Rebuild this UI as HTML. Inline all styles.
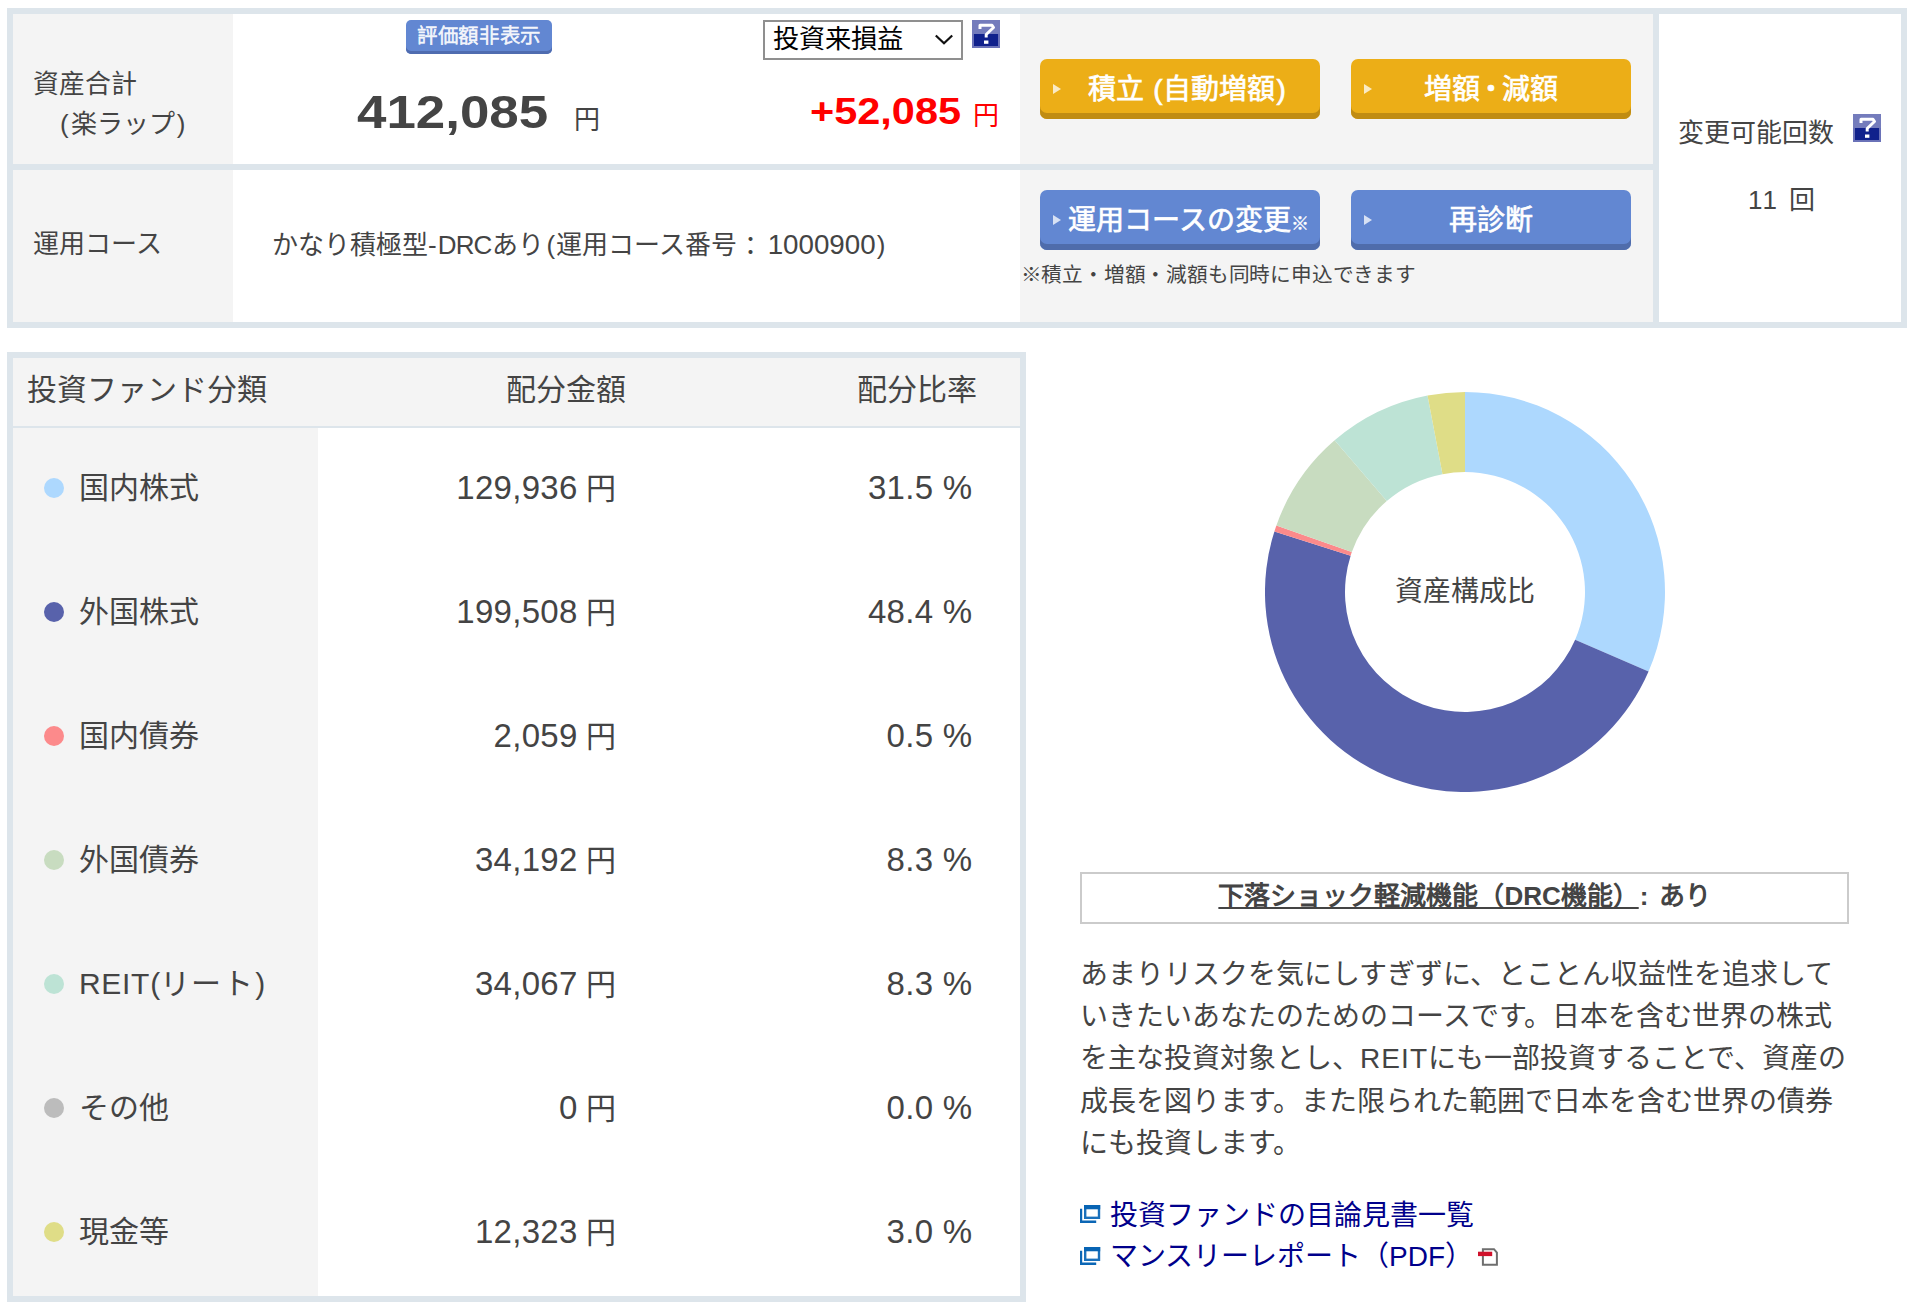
<!DOCTYPE html>
<html lang="zh-CN">
<head>
<meta charset="utf-8">
<title>楽ラップ</title>
<style>
html,body{margin:0;padding:0;background:#fff;}
body{width:1924px;height:1306px;position:relative;overflow:hidden;
  font-family:"Liberation Sans",sans-serif;color:#444;font-size:26px;}
.abs{position:absolute;white-space:nowrap;}
.bd{position:absolute;background:#dde5eb;}
.gray{position:absolute;background:#f4f4f4;}
.t26{font-size:26px;line-height:38px;}
.t30{font-size:30px;line-height:40px;}
/* buttons */
.btn{position:absolute;width:280px;height:60px;border-radius:7px;box-sizing:border-box;
  color:#fff;font-weight:normal;-webkit-text-stroke:0.7px #fff;font-size:28px;line-height:61px;text-align:center;white-space:nowrap;}
.btn.or{background:#ecae17;box-shadow:inset 0 -6px 0 #c08c12;}
.btn.bl{background:#6287d2;box-shadow:inset 0 -6px 0 #4f6cab;}
.btn i{position:absolute;left:13px;top:25px;width:0;height:0;border-left:8px solid rgba(255,255,255,.75);
  border-top:5px solid transparent;border-bottom:5px solid transparent;}
/* table2 */
.row{position:absolute;left:13px;width:1007px;height:124px;}
.row .dot{position:absolute;left:31px;top:50px;width:20px;height:20px;border-radius:50%;}
.row .lb{position:absolute;left:66px;top:40px;font-size:30px;line-height:40px;white-space:nowrap;}
.row .am{position:absolute;right:404px;top:40px;font-size:30px;line-height:40px;white-space:nowrap;}
.row .pc{position:absolute;right:47.5px;top:39.5px;font-size:33px;letter-spacing:.3px;line-height:40px;white-space:nowrap;}
a.lk{color:#00008b;text-decoration:none;}
.n{font-size:1.1em;letter-spacing:.3px;}
.sx{display:inline-block;transform-origin:0 50%;}
</style>
</head>
<body>

<!-- ================= TOP TABLE ================= -->
<div class="bd" style="left:7px;top:8px;width:1900px;height:320px;"></div>
<!-- row 1 cells -->
<div class="gray" style="left:13px;top:14px;width:220px;height:150px;"></div>
<div class="abs" style="left:233px;top:14px;width:787px;height:150px;background:#fff;"></div>
<div class="gray" style="left:1020px;top:14px;width:633px;height:150px;"></div>
<!-- row 2 cells -->
<div class="gray" style="left:13px;top:170px;width:220px;height:152px;"></div>
<div class="abs" style="left:233px;top:170px;width:787px;height:152px;background:#fff;"></div>
<div class="gray" style="left:1020px;top:170px;width:633px;height:152px;"></div>
<!-- right cell -->
<div class="abs" style="left:1659px;top:14px;width:242px;height:308px;background:#fff;"></div>

<div class="abs t26" style="left:33px;top:65px;">資産合計</div>
<div class="abs t26" style="left:60px;top:105px;">(<span style="margin:0 2px 0 2px">楽ラップ</span>)</div>
<div class="abs t26" style="left:33px;top:225px;">運用コース</div>

<!-- hide valuation badge -->
<div class="abs" style="left:406px;top:20px;width:146px;height:34px;border-radius:5px;background:#6287d2;box-shadow:inset 0 -3px 0 #4f6cb0;color:rgba(255,255,255,.92);font-weight:normal;-webkit-text-stroke:0.5px rgba(255,255,255,.9);font-size:20.5px;letter-spacing:.7px;line-height:31.5px;text-align:center;">評価額非表示</div>

<div class="abs" id="total" style="left:357px;top:83.5px;font-size:46.8px;line-height:56px;font-weight:bold;"><span class="sx" style="transform:scaleX(1.13)">412,085</span></div>
<div class="abs t26" style="left:574px;top:101px;">円</div>

<!-- select -->
<div class="abs" style="left:763px;top:20px;width:200px;height:40px;box-sizing:border-box;border:2px solid #8f8f8f;background:#fff;color:#000;font-size:26.3px;line-height:34px;padding-left:8px;">投資来損益
<svg style="position:absolute;left:167.3px;top:10.3px" width="24" height="16" viewBox="0 0 24 16"><path d="M3.8 3.5 L12 11.3 L20.2 3.5" fill="none" stroke="#111" stroke-width="2.2"/></svg>
</div>
<!-- help icon 1 -->
<svg class="abs" style="left:972px;top:20px" width="28" height="28" viewBox="0 0 28 28">
<rect width="28" height="28" fill="#6a72b8"/><rect x="0" y="0" width="28" height="14" fill="#747cbc"/><rect x="2" y="14" width="24" height="12" fill="#10218c"/>
<path d="M8 9 V5.2 H20 L21.5 7.5 L14.2 14.5 V17.5" fill="none" stroke="#fff" stroke-width="3" stroke-linejoin="round"/><rect x="12" y="20.5" width="4.4" height="3.3" fill="#fff"/>
</svg>

<div class="abs" id="gain" style="left:809.5px;top:89px;font-size:36.7px;line-height:46px;font-weight:bold;color:#f00;"><span class="sx" style="transform:scaleX(1.13)">+52,085</span></div>
<div class="abs t26" style="left:973px;top:97px;color:#f00;">円</div>

<div class="abs t26" style="left:272px;top:226px;">かなり積極型<span style="margin:0 1px 0 0">-</span><span style="letter-spacing:-0.8px">DRC</span><span style="margin-left:0.8px">あり</span><span style="margin:0 1px 0 2px">(</span>運用コース番号<span style="position:relative;left:7px">：</span><span style="font-size:1.067em;margin-left:4.6px">1000900</span><span style="margin-left:1px">)</span></div>

<!-- buttons -->
<div class="btn or" style="left:1040px;top:59px;padding-left:14px;"><i></i>積立<span style="margin-left:9px">(</span>自動増額<span style="margin-left:2px">)</span></div>
<div class="btn or" style="left:1351px;top:59px;"><i></i>増額<span style="margin:0 -3px">・</span>減額</div>
<div class="btn bl" style="left:1040px;top:190px;padding-left:16px;"><i></i>運用コースの変更<span style="font-size:18px;-webkit-text-stroke:0.3px #fff;">※</span></div>
<div class="btn bl" style="left:1351px;top:190px;"><i></i>再診断</div>
<div class="abs" style="left:1020.5px;top:259.5px;font-size:20.65px;line-height:30px;letter-spacing:-0.2px;">※積立・増額・減額も同時に申込できます</div>

<!-- right cell text -->
<div class="abs t26" style="left:1678px;top:114px;">変更可能回数</div>
<svg class="abs" style="left:1853px;top:114px" width="28" height="28" viewBox="0 0 28 28">
<rect width="28" height="28" fill="#6a72b8"/><rect x="0" y="0" width="28" height="14" fill="#747cbc"/><rect x="2" y="14" width="24" height="12" fill="#10218c"/>
<path d="M8 9 V5.2 H20 L21.5 7.5 L14.2 14.5 V17.5" fill="none" stroke="#fff" stroke-width="3" stroke-linejoin="round"/><rect x="12" y="20.5" width="4.4" height="3.3" fill="#fff"/>
</svg>
<div class="abs t26" style="left:1748px;top:181px;"><span style="letter-spacing:2px">11</span> <span style="margin-left:3px">回</span></div>

<!-- ================= FUND TABLE ================= -->
<div class="bd" style="left:7px;top:352px;width:1019px;height:950px;"></div>
<div class="gray" style="left:13px;top:358px;width:1007px;height:68px;"></div>
<div class="gray" style="left:13px;top:428px;width:305px;height:868px;"></div>
<div class="abs" style="left:318px;top:428px;width:702px;height:868px;background:#fff;"></div>

<div class="abs t30" style="left:27px;top:370px;">投資ファンド分類</div>
<div class="abs t30" style="left:506px;top:370px;">配分金額</div>
<div class="abs t30" style="left:857px;top:370px;">配分比率</div>

<div class="row" style="top:428px;"><span class="dot" style="background:#add8fe"></span><span class="lb">国内株式</span><span class="am"><span class="n">129,936</span> 円</span><span class="pc">31.5 %</span></div>
<div class="row" style="top:552px;"><span class="dot" style="background:#5862ab"></span><span class="lb">外国株式</span><span class="am"><span class="n">199,508</span> 円</span><span class="pc">48.4 %</span></div>
<div class="row" style="top:676px;"><span class="dot" style="background:#fc8a8b"></span><span class="lb">国内債券</span><span class="am"><span class="n">2,059</span> 円</span><span class="pc">0.5 %</span></div>
<div class="row" style="top:800px;"><span class="dot" style="background:#c8dcc0"></span><span class="lb">外国債券</span><span class="am"><span class="n">34,192</span> 円</span><span class="pc">8.3 %</span></div>
<div class="row" style="top:924px;"><span class="dot" style="background:#bde3d5"></span><span class="lb"><span style="letter-spacing:.7px">REIT</span>(<span style="letter-spacing:1.2px">リート</span><span style="margin-left:1.4px">)</span></span><span class="am"><span class="n">34,067</span> 円</span><span class="pc">8.3 %</span></div>
<div class="row" style="top:1048px;"><span class="dot" style="background:#bcbcbc"></span><span class="lb">その他</span><span class="am"><span class="n">0</span> 円</span><span class="pc">0.0 %</span></div>
<div class="row" style="top:1172px;"><span class="dot" style="background:#dfdd87"></span><span class="lb">現金等</span><span class="am"><span class="n">12,323</span> 円</span><span class="pc">3.0 %</span></div>

<!-- ================= DONUT ================= -->
<svg class="abs" id="donut" style="left:1265px;top:392px" width="400" height="400" viewBox="-200 -200 400 400">
<path d="M0.00 -200.00A200 200 0 0 1 183.55 79.43L110.13 47.66A120 120 0 0 0 0.00 -120.00Z" fill="#add8fe"/>
<path d="M183.55 79.43A200 200 0 0 1 -190.60 -60.61L-114.36 -36.36A120 120 0 0 0 110.13 47.66Z" fill="#5862ab"/>
<path d="M-190.60 -60.61A200 200 0 0 1 -188.60 -66.56L-113.16 -39.94A120 120 0 0 0 -114.36 -36.36Z" fill="#fc8a8b"/>
<path d="M-188.60 -66.56A200 200 0 0 1 -130.37 -151.67L-78.22 -91.00A120 120 0 0 0 -113.16 -39.94Z" fill="#c8dcc0"/>
<path d="M-130.37 -151.67A200 200 0 0 1 -37.48 -196.46L-22.49 -117.87A120 120 0 0 0 -78.22 -91.00Z" fill="#bde3d5"/>
<path d="M-37.48 -196.46A200 200 0 0 1 -0.00 -200.00L-0.00 -120.00A120 120 0 0 0 -22.49 -117.87Z" fill="#dfdd87"/>
</svg>
<div class="abs" style="left:1365px;top:572px;width:200px;text-align:center;font-size:28px;line-height:40px;">資産構成比</div>

<!-- ================= DRC / description ================= -->
<div class="abs" style="left:1080px;top:872px;width:769px;height:52px;box-sizing:border-box;border:2px solid #cbcbcb;text-align:center;font-weight:bold;font-size:26px;line-height:44px;"><span style="text-decoration:underline;">下落ショック軽減機能（DRC機能）</span><span style="margin:0 3px 0 1px">:</span> あり</div>

<div class="abs" style="left:1080px;top:954px;font-size:28px;line-height:42.2px;">あまりリスクを気にしすぎずに、とことん収益性を追求して<br>いきたいあなたのためのコースです。日本を含む世界の株式<br>を主な投資対象とし、<span style="letter-spacing:1.1px">REIT</span>にも一部投資することで、資産の<br>成長を図ります。また限られた範囲で日本を含む世界の債券<br>にも投資します。</div>

<!-- links -->
<svg class="abs" style="left:1080px;top:1205px" width="21" height="19" viewBox="0 0 21 19"><path d="M0 3.8h2.2v11.8h14v2.3H0z" fill="#0b66b5"/><rect x="4" y="0" width="16.2" height="14" fill="#1a70bb"/><rect x="4" y="0" width="16.2" height="4.3" fill="#0764b4"/><rect x="6.4" y="4.3" width="11.4" height="7.3" fill="#fff"/></svg>
<div class="abs" style="left:1110px;top:1195px;font-size:28px;line-height:41px;"><a class="lk">投資ファンドの目論見書一覧</a></div>
<svg class="abs" style="left:1080px;top:1247px" width="21" height="19" viewBox="0 0 21 19"><path d="M0 3.8h2.2v11.8h14v2.3H0z" fill="#0b66b5"/><rect x="4" y="0" width="16.2" height="14" fill="#1a70bb"/><rect x="4" y="0" width="16.2" height="4.3" fill="#0764b4"/><rect x="6.4" y="4.3" width="11.4" height="7.3" fill="#fff"/></svg>
<div class="abs" style="left:1110px;top:1236px;font-size:28px;line-height:41px;"><a class="lk">マンスリーレポート（PDF）</a></div>
<svg class="abs" style="left:1477px;top:1247px" width="22" height="20" viewBox="0 0 22 20"><path d="M5.9 2.2H17L19.9 5.6V17.8H5.9Z" fill="#fff" stroke="#6e6e6e" stroke-width="2"/><rect x="1" y="4.7" width="14.2" height="4.4" fill="#d0112b"/></svg>

</body>
</html>
